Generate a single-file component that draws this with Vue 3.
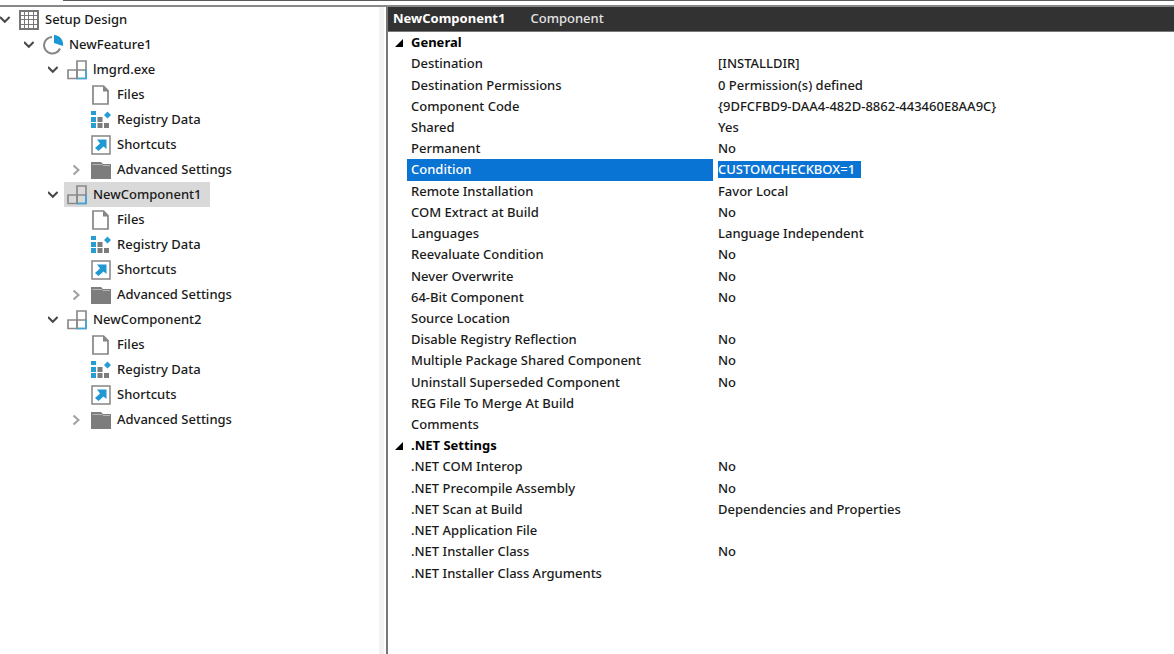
<script setup>
import { ref } from 'vue'

const component = () => [
  { label: 'Files', icon: 'file' },
  { label: 'Registry Data', icon: 'registry' },
  { label: 'Shortcuts', icon: 'shortcut' },
  { label: 'Advanced Settings', icon: 'folder', toggle: 'closed' },
].map((item) => ({ ...item, level: 3 }))

const tree = [
  { label: 'Setup Design', icon: 'grid', level: 0, toggle: 'open' },
  { label: 'NewFeature1', icon: 'feature', level: 1, toggle: 'open' },
  { label: 'lmgrd.exe', icon: 'component', level: 2, toggle: 'open' },
  ...component(),
  { label: 'NewComponent1', icon: 'component', level: 2, toggle: 'open', selected: true },
  ...component(),
  { label: 'NewComponent2', icon: 'component', level: 2, toggle: 'open' },
  ...component(),
]

const condition = ref('CUSTOMCHECKBOX=1')

const rows = [
  { section: 'General' },
  { name: 'Destination', value: '[INSTALLDIR]' },
  { name: 'Destination Permissions', value: '0 Permission(s) defined' },
  { name: 'Component Code', value: '{9DFCFBD9-DAA4-482D-8862-443460E8AA9C}' },
  { name: 'Shared', value: 'Yes' },
  { name: 'Permanent', value: 'No' },
  { name: 'Condition', active: true },
  { name: 'Remote Installation', value: 'Favor Local' },
  { name: 'COM Extract at Build', value: 'No' },
  { name: 'Languages', value: 'Language Independent' },
  { name: 'Reevaluate Condition', value: 'No' },
  { name: 'Never Overwrite', value: 'No' },
  { name: '64-Bit Component', value: 'No' },
  { name: 'Source Location', value: '' },
  { name: 'Disable Registry Reflection', value: 'No' },
  { name: 'Multiple Package Shared Component', value: 'No' },
  { name: 'Uninstall Superseded Component', value: 'No' },
  { name: 'REG File To Merge At Build', value: '' },
  { name: 'Comments', value: '' },
  { section: '.NET Settings' },
  { name: '.NET COM Interop', value: 'No' },
  { name: '.NET Precompile Assembly', value: 'No' },
  { name: '.NET Scan at Build', value: 'Dependencies and Properties' },
  { name: '.NET Application File', value: '' },
  { name: '.NET Installer Class', value: 'No' },
  { name: '.NET Installer Class Arguments', value: '' },
]
</script>

<template>
  <div class="window">
    <div class="topbar"><div class="topline"></div></div>
    <div class="body">
      <nav class="tree" aria-label="Setup Design">
        <ul>
          <li v-for="(node, i) in tree" :key="i" :class="'level' + node.level">
            <button v-if="node.toggle" class="toggle" :class="node.toggle" :aria-label="'Toggle ' + node.label">
              <svg v-if="node.toggle === 'open'" width="12" height="12" viewBox="0 0 12 12"><path d="M0 3l4.800 4.800L9.600 3" /></svg>
              <svg v-else width="12" height="12" viewBox="0 0 12 12"><path d="M1.500 1.500l5 4.500-5 4.500" /></svg>
            </button>
            <span v-else class="toggle"></span>
            <button class="node" :class="{ selected: node.selected }">
              <svg v-if="node.icon === 'grid'" width="20" height="20" viewBox="0 0 20 20">
                <rect width="20" height="20" fill="#777" />
                <path fill="#fff" d="M2 2h3v3H2zM6 2h3v3H6zM10 2h4v3h-4zM15 2h3v3h-3zM2 6h3v3H2zM6 6h3v3H6zM10 6h4v3h-4zM15 6h3v3h-3zM2 10h3v4H2zM6 10h3v4H6zM10 10h4v4h-4zM15 10h3v4h-3zM2 15h3v3H2zM6 15h3v3H6zM10 15h4v3h-4zM15 15h3v3h-3z" />
              </svg>
              <svg v-else-if="node.icon === 'feature'" width="20" height="20" viewBox="0 0 20 20">
                <path d="M9 2A8.300 8.300 0 1 0 17 13.500" fill="none" stroke="#858585" stroke-width="2" />
                <path d="M11 0a9 9 0 0 1 8.800 11L11 8z" fill="#1b97d5" />
              </svg>
              <svg v-else-if="node.icon === 'component'" width="20" height="20" viewBox="0 0 20 20">
                <path d="M10 10H1v8.500h9zM10 10V1h9v9" fill="none" stroke="#8a8a8a" stroke-width="1.700" />
                <path d="M10 10h9v8.500h-9z" fill="none" stroke="#8a8a8a" stroke-width="1.700" />
                <path d="M19 10v8.500h-9" fill="none" stroke="#3ba7dc" stroke-width="1.700" />
              </svg>
              <svg v-else-if="node.icon === 'file'" width="20" height="20" viewBox="0 0 20 20">
                <path d="M2 1h10.500L17 5.500V19H2z" fill="#fff" stroke="#858585" stroke-width="1.700" />
                <path d="M12 1l5.500 5.500H12z" fill="#858585" />
              </svg>
              <svg v-else-if="node.icon === 'registry'" width="20" height="20" viewBox="0 0 20 20">
                <path d="M0 1h5v4H0zM0 7h5v5H0zM0 13h5v5H0zM16.500 1.500l3.500 3.500-3.500 3.500L13 5z" fill="#279dd4" />
                <path d="M6.500 7h5v5h-5zM6.500 13h5v5h-5zM13 13h5v5h-5z" fill="#7c7c7c" />
              </svg>
              <svg v-else-if="node.icon === 'shortcut'" width="20" height="20" viewBox="0 0 20 20">
                <rect x="1" y="1" width="18" height="18" fill="#fff" stroke="#858585" stroke-width="1.500" />
                <path d="M6 4.500h9.500V14l-3-2.500-5 4.500L4 13l5-4.500z" fill="#1f98d4" />
              </svg>
              <svg v-else width="20" height="20" viewBox="0 0 20 20">
                <path d="M0 2h10l2 2h8v15H0z" fill="#7d7d7d" />
                <path d="M1.500 4.500H11l1 1h7" fill="none" stroke="#b5b5b5" stroke-width="1" />
              </svg>
              <span>{{ node.label }}</span>
            </button>
          </li>
        </ul>
      </nav>
      <div class="splitter"></div>
      <main>
        <header>
          <h1>NewComponent1</h1>
          <span>Component</span>
        </header>
        <table>
          <colgroup>
            <col class="gutter" />
            <col class="names" />
            <col />
          </colgroup>
          <tbody>
            <tr v-for="(row, i) in rows" :key="i" :class="{ active: row.active }">
              <template v-if="row.section">
                <td>
                  <button class="collapse" :aria-label="'Collapse ' + row.section">
                    <svg width="8" height="8" viewBox="0 0 8 8"><path d="M8 0v8H0z" /></svg>
                  </button>
                </td>
                <th colspan="2" class="section">{{ row.section }}</th>
              </template>
              <template v-else>
                <td></td>
                <th scope="row">
                  <label v-if="row.active" for="condition">{{ row.name }}</label>
                  <template v-else>{{ row.name }}</template>
                </th>
                <td class="value">
                  <input v-if="row.active" id="condition" v-model="condition" type="text" />
                  <template v-else>{{ row.value }}</template>
                </td>
              </template>
            </tr>
          </tbody>
        </table>
      </main>
    </div>
  </div>
</template>

<style>
body {
  margin: 0;
  background: #fff;
}
</style>

<style scoped>
.window {
  display: flex;
  flex-direction: column;
  min-height: 100vh;
  color: #1a1a1a;
  font-family: "Noto Sans", "Open Sans", sans-serif;
  font-size: 13px;
  font-weight: 500;
  line-height: 17px;
}
.topbar {
  height: 5px;
  border-bottom: 2px solid #888;
  background: #fff;
}
.topline {
  height: 1px;
  margin-left: 63px;
  background: #5e5a5e;
}
.body {
  display: flex;
  flex: 1;
}
.tree {
  flex: 0 0 379px;
}
ul {
  margin: 0;
  padding: 0;
  list-style: none;
}
li {
  display: flex;
  height: 25px;
}
.level1 { padding-left: 24px; }
.level2 { padding-left: 48px; }
.level3 { padding-left: 72px; }
button {
  display: flex;
  align-items: center;
  padding: 0;
  border: 0;
  background: none;
  color: inherit;
  font: inherit;
}
.toggle {
  flex: 0 0 16px;
}
.toggle path {
  fill: none;
  stroke: #484848;
  stroke-width: 2;
}
.toggle.closed path {
  stroke: #a0a0a0;
}
.node {
  gap: 6px;
  padding: 0 9px 0 3px;
  white-space: nowrap;
}
.selected {
  background: #d9d9d9;
}
.splitter {
  flex: 0 0 7px;
  border-right: 2px solid #777;
  background: linear-gradient(to right, #f2f2f2 5px, #fff 5px);
}
main {
  flex: 1;
  min-width: 0;
}
header {
  display: flex;
  align-items: center;
  gap: 25px;
  height: 22px;
  padding: 0 0 2px 5px;
  border-bottom: 1px solid #777;
  background: #323232;
  color: #e4e4e4;
}
h1 {
  margin: 0;
  color: #fff;
  font-size: 13px;
  font-weight: 700;
}
table {
  width: 100%;
  height: 552px;
  border-collapse: collapse;
  table-layout: fixed;
}
.gutter { width: 19px; }
.names { width: 306px; }
th,
td {
  padding: 0;
  text-align: left;
  font-weight: 500;
  white-space: nowrap;
}
th {
  padding-left: 4px;
}
.section {
  color: #000;
  font-weight: 700;
}
.value {
  padding-left: 5px;
}
.collapse {
  padding-left: 7px;
}
.active th {
  background: #0a74d4;
  color: #fff;
}
label,
input {
  display: block;
}
input {
  width: 143px;
  height: 17px;
  padding: 0;
  border: 0;
  outline: 0;
  background: #0a74d4;
  color: #fff;
  font: inherit;
}
</style>
